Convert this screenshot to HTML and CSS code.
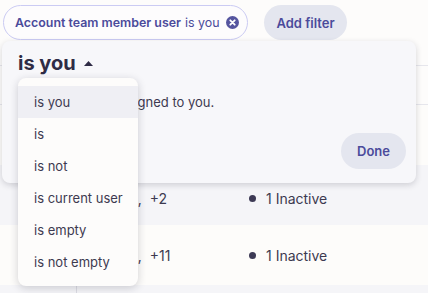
FILE: index.html
```html
<!DOCTYPE html>
<html>
<head>
    <title>Filters</title>
    <link rel="stylesheet" href="styles.css">
</head>
<body>
    <div class="toolbar">
        <div class="chip">
            <span class="chip-field">Account team member user</span>
            <span class="chip-value">is you</span>
            <svg class="chip-clear" width="13" height="13" viewBox="0 0 13 13">
                <circle cx="6.5" cy="6.5" r="6.5" fill="#55559f"/>
                <path d="M4.3 4.3 L8.7 8.7 M8.7 4.3 L4.3 8.7" stroke="#fff" stroke-width="1.8" stroke-linecap="round"/>
            </svg>
        </div>
        <button type="button" class="add-filter">Add filter</button>
    </div>

    <div class="table">
        <div class="row head"></div>
        <div class="row odd"><div class="cell"></div><div class="cell"></div><div class="cell"></div></div>
        <div class="row even low">
            <div class="cell"></div>
            <div class="cell name">Ana Ruis, &nbsp;+2</div>
            <div class="cell status"><span class="dot"></span>1 Inactive</div>
        </div>
        <div class="row odd">
            <div class="cell"></div>
            <div class="cell name">Ana Ruis, &nbsp;+11</div>
            <div class="cell status"><span class="dot"></span>1 Inactive</div>
        </div>
        <div class="row even"><div class="cell first"></div><div class="cell"></div><div class="cell"></div></div>
    </div>

    <!-- filter popover -->
    <div class="popover">
        <div class="operator">
            is you
            <svg width="9" height="5" viewBox="0 0 9 5"><path d="M0 5 L4.5 0 L9 5 Z" fill="#2f2b45"/></svg>
        </div>
        <p class="hint">Shows records assigned to you.</p>
        <div class="actions">
            <button type="button" class="done">Done</button>
        </div>

        <ul class="menu">
            <li class="selected">is you</li>
            <li>is</li>
            <li>is not</li>
            <li>is current user</li>
            <li>is empty</li>
            <li>is not empty</li>
        </ul>
    </div>
</body>
</html>
```

FILE: styles.css
```css
body {
    margin: 0;
    font-family: Inter, "Noto Sans", sans-serif;
    background-color: #fdfcfb;
    color: #3d3a50;
    overflow: hidden;
}

.toolbar {
    display: flex;
    align-items: center;
    gap: 16px;
    padding: 5px 3px;
}

.chip {
    display: flex;
    align-items: center;
    height: 35px;
    box-sizing: border-box;
    padding: 0 8px 0 11px;
    border: 1px solid #cbcbf3;
    border-radius: 18px;
    background-color: #fdfcfd;
    font-size: 12.4px;
    color: #4b4b9b;
}

.chip-field {
    font-weight: 600;
}

.chip-value {
    margin-left: 4px;
}

.chip-clear {
    margin-left: 7px;
}

.add-filter,
.done {
    height: 35px;
    padding: 0 12px;
    border: none;
    border-radius: 18px;
    background-color: #e4e6ef;
    color: #4b4b9b;
    font-family: Inter, "Noto Sans", sans-serif;
    font-size: 13px;
    font-weight: 600;
}

.table {
    margin-top: 20px;
}

.row {
    display: grid;
    grid-template-columns: 77px 163px 1fr;
    height: 60px;
    align-items: center;
    font-size: 14px;
}

.row.head {
    height: 40px;
    border-top: 1px solid #e6e6ec;
    border-bottom: 1px solid #e6e6ec;
    box-sizing: border-box;
}

.row.odd {
    background-color: #fdfcfa;
}

.row.even {
    background-color: #f5f5f8;
}

.row.low .cell {
    padding-top: 6px;
    box-sizing: border-box;
}

.cell {
    height: 100%;
    display: flex;
    align-items: center;
}

.cell.first {
    border-right: 1px solid #dcdce3;
    box-sizing: border-box;
}

.cell.name {
    padding-left: 3px;
    white-space: nowrap;
}

.cell.status {
    padding-left: 9px;
}

.dot {
    width: 7px;
    height: 7px;
    border-radius: 50%;
    background-color: #3d3a55;
    margin-right: 10px;
}

.popover {
    position: absolute;
    left: 2px;
    top: 41px;
    width: 414px;
    height: 142px;
    box-sizing: border-box;
    padding: 9px 10px 0 16px;
    border-radius: 8px;
    background-color: #f7f7fa;
    box-shadow: 0 2px 6px rgba(30, 30, 50, 0.18);
}

.operator {
    display: flex;
    align-items: center;
    gap: 8px;
    font-size: 20px;
    font-weight: 700;
    color: #2f2b45;
    line-height: 26px;
}

.hint {
    margin: 18px 0 0;
    font-size: 13px;
}

.actions {
    display: flex;
    justify-content: flex-end;
    margin-top: 23px;
}

.done {
    height: 36px;
    padding: 0 16px;
}

.menu {
    position: absolute;
    left: 16px;
    top: 37px;
    width: 120px;
    margin: 0;
    padding: 8px 0;
    list-style: none;
    border-radius: 8px;
    background-color: #fdfcfb;
    box-shadow: 0 2px 8px rgba(30, 30, 50, 0.2);
}

.menu li {
    height: 32px;
    line-height: 32px;
    padding-left: 16px;
    font-size: 13px;
    color: #3d3a50;
}

.menu li.selected {
    background-color: #efeff4;
}
```
